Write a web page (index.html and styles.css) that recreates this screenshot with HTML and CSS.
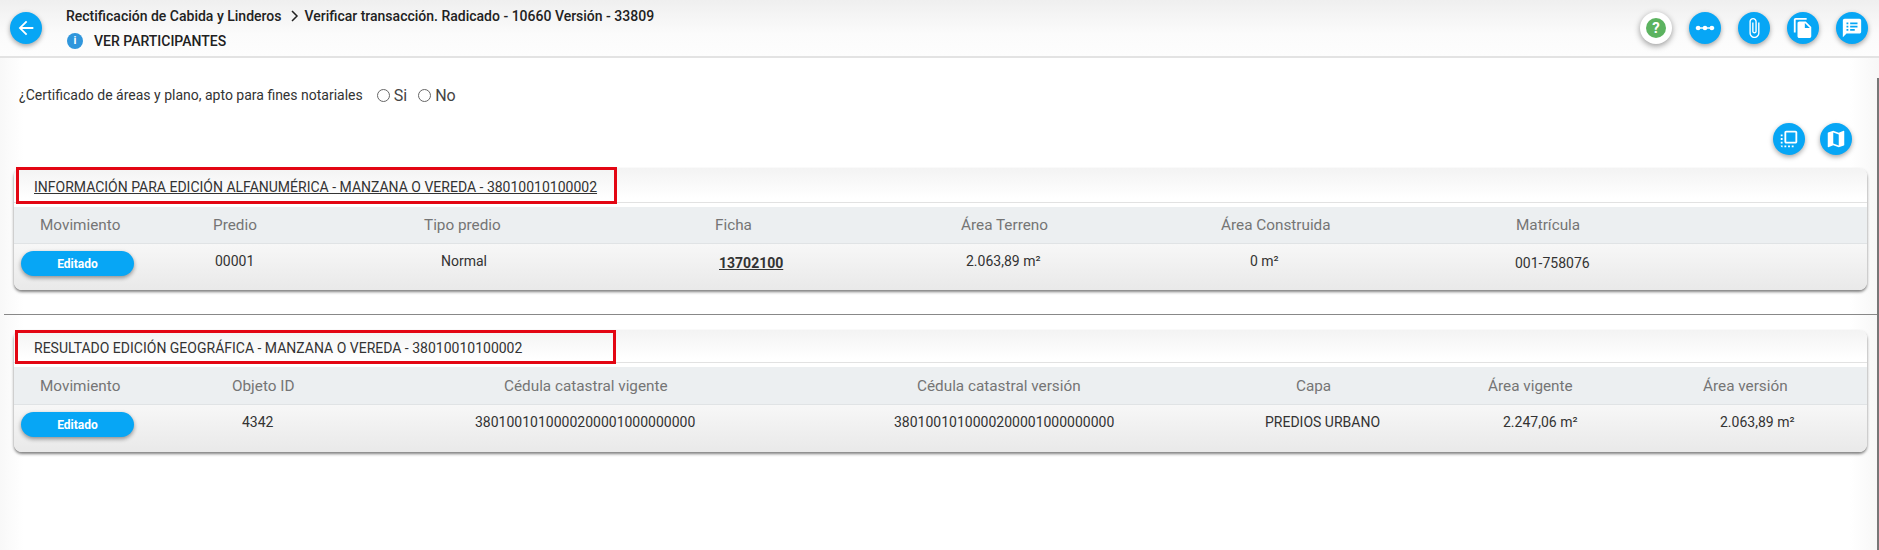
FILE: index.html
```html
<!DOCTYPE html>
<html lang="es">
<head>
<meta charset="utf-8">
<title>Verificar transacción</title>
<link rel="stylesheet" href="styles.css">
</head>
<body>
<header class="topbar">
  <button class="fab back"><svg viewBox="0 0 24 24"><path d="M20 11H7.83l5.59-5.59L12 4l-8 8 8 8 1.41-1.41L7.83 13H20v-2z"/></svg></button>
  <div class="heading">
    <div class="crumbs">Rectificación de Cabida y Linderos<svg class="chev" viewBox="0 0 10 12"><path d="M2 1l5 5-5 5" fill="none" stroke="#222" stroke-width="1.5"/></svg>Verificar transacción. Radicado - 10660 Versión - 33809</div>
    <div class="participants"><span class="info">i</span>VER PARTICIPANTES</div>
  </div>
  <div class="actions">
    <button class="fab help"><span class="help-dot">?</span></button>
    <button class="fab"><svg viewBox="0 0 24 24"><path d="M2 12h20" stroke="#fff" stroke-width="1.6"/><circle cx="4.500" cy="12" r="2.500"/><circle cx="12" cy="12" r="2.500"/><circle cx="19.500" cy="12" r="2.500"/></svg></button>
    <button class="fab"><svg viewBox="0 0 24 24"><path d="M16.5 6v11.500c0 2.210-1.790 4-4 4s-4-1.790-4-4V5c0-1.380 1.120-2.500 2.500-2.500s2.500 1.120 2.500 2.500v10.500c0 .55-.45 1-1 1s-1-.45-1-1V6H10v9.500c0 1.380 1.120 2.500 2.500 2.500s2.500-1.120 2.500-2.500V5c0-2.210-1.790-4-4-4S7 2.790 7 5v12.500c0 3.040 2.460 5.500 5.500 5.500s5.500-2.460 5.500-5.500V6h-1.500z"/></svg></button>
    <button class="fab"><svg viewBox="0 0 24 24"><path d="M16 1H4c-1.100 0-2 .9-2 2v14h2V3h12V1zm-1 4l6 6v10c0 1.100-.9 2-2 2H7.990C6.890 23 6 22.100 6 21l.01-14c0-1.100.89-2 1.990-2h7zm-1 7h5.500L14 6.500V12z"/></svg></button>
    <button class="fab"><svg viewBox="0 0 24 24"><path fill-rule="evenodd" d="M20 2H4c-1.100 0-2 .9-2 2v18l4-4h14c1.100 0 2-.9 2-2V4c0-1.100-.9-2-2-2zM6 6h2v2H6V6zm4 0h8v2h-8V6zm-4 3.500h2v2H6v-2zm4 0h8v2h-8v-2zM6 13h2v2H6v-2zm4 0h5v2h-5v-2z"/></svg></button>
  </div>
</header>

<main class="content">
  <span class="edge"></span>
  <form class="question">
    <span class="q-label">¿Certificado de áreas y plano, apto para fines notariales</span>
    <label class="opt"><span class="radio"></span>Si</label>
    <label class="opt"><span class="radio"></span>No</label>
  </form>

  <div class="tools">
    <button class="fab"><svg viewBox="0 0 24 24"><path d="M3 13h2v-2H3v2zm0 4h2v-2H3v2zm2 4v-2H3c0 1.100.89 2 2 2zM3 9h2V7H3v2zm12 12h2v-2h-2v2zm4-18H9c-1.110 0-2 .9-2 2v10c0 1.100.89 2 2 2h10c1.100 0 2-.9 2-2V5c0-1.100-.9-2-2-2zm0 12H9V5h10v10zm-8 6h2v-2h-2v2zm-4 0h2v-2H7v2z"/></svg></button>
    <button class="fab"><svg viewBox="0 0 24 24"><path d="M20.500 3l-.16.03L15 5.100 9 3 3.360 4.900c-.21.07-.36.25-.36.48V20.500c0 .28.22.5.5.5l.16-.03L9 18.900l6 2.100 5.640-1.900c.21-.07.36-.25.36-.48V3.500c0-.28-.22-.5-.5-.5zM15 19l-6-2.110V5l6 2.110V19z"/></svg></button>
  </div>

  <section class="card first">
    <span class="mark"></span>
    <h2 class="card-title linked">INFORMACIÓN PARA EDICIÓN ALFANUMÉRICA - MANZANA O VEREDA - 38010010100002</h2>
    <div class="thead cols-a-h">
      <span>Movimiento</span><span>Predio</span><span>Tipo predio</span><span>Ficha</span><span>Área Terreno</span><span>Área Construida</span><span>Matrícula</span>
    </div>
    <div class="tbody cols-a-b">
      <button class="pill">Editado</button><span>00001</span><span>Normal</span><a class="ficha low">13702100</a><span>2.063,89 m²</span><span>0 m²</span><span class="low">001-758076</span>
    </div>
  </section>

  <hr class="rule">

  <section class="card second">
    <span class="mark"></span>
    <h2 class="card-title">RESULTADO EDICIÓN GEOGRÁFICA - MANZANA O VEREDA - 38010010100002</h2>
    <div class="thead cols-b-h">
      <span>Movimiento</span><span>Objeto ID</span><span>Cédula catastral vigente</span><span>Cédula catastral versión</span><span>Capa</span><span>Área vigente</span><span>Área versión</span>
    </div>
    <div class="tbody cols-b-b">
      <button class="pill">Editado</button><span>4342</span><span>3801001010000200001000000000</span><span>3801001010000200001000000000</span><span>PREDIOS URBANO</span><span>2.247,06 m²</span><span>2.063,89 m²</span>
    </div>
  </section>
</main>
</body>
</html>
```
FILE: styles.css
```css
* { box-sizing: border-box; }
html, body { margin: 0; height: 100%; }
body {
  font-family: Roboto, "Liberation Sans", sans-serif;
  font-size: 14px;
  color: #212121;
  background: linear-gradient(90deg, #f8f8f8 0, #fff 24px, #fff 1850px, #f7f7f7 100%);
  overflow: hidden;
}
button { font-family: inherit; border: 0; padding: 0; cursor: pointer; }

.topbar {
  height: 58px;
  display: flex;
  align-items: center;
  padding: 0 11px 1px 10px;
  border-bottom: 2px solid #e3e3e3;
  background: linear-gradient(180deg, #efefef 0, #fbfbfb 60%, #fdfdfd 100%);
}
.fab {
  width: 32px;
  height: 32px;
  border-radius: 50%;
  background: #07a6f5;
  display: flex;
  align-items: center;
  justify-content: center;
  box-shadow: 0 2px 5px rgba(0, 0, 0, .35);
  flex: none;
}
.fab svg { width: 22px; height: 22px; fill: #fff; }
.heading { margin-left: 24px; flex: 1; margin-top: 2px; }
.crumbs {
  font-weight: 500;
  font-size: 14px;
  line-height: 18px;
  color: #222;
  white-space: nowrap;
  display: flex;
  align-items: center;
}
.chev { width: 10px; height: 12px; margin: 0 4px 0 9px; }
.participants {
  display: flex;
  align-items: center;
  margin-top: 7px;
  margin-left: 1px;
  font-weight: 500;
  font-size: 14px;
  line-height: 18px;
}
.info {
  width: 16px;
  height: 16px;
  border-radius: 50%;
  background: #2f96dc;
  color: #fff;
  font-size: 11px;
  font-weight: 700;
  line-height: 16px;
  text-align: center;
  margin-right: 11px;
}
.actions { display: flex; gap: 17px; }
.help { background: #fff; box-shadow: 0 2px 6px rgba(0, 0, 0, .4); }
.help-dot {
  width: 20px;
  height: 20px;
  border-radius: 50%;
  background: #5cb360;
  color: #fff;
  font-size: 15px;
  font-weight: 700;
  line-height: 20px;
  text-align: center;
}

.content { position: relative; padding: 0 12px 0 14px; height: 492px; }
.edge {
  position: absolute;
  right: 0;
  top: 20px;
  bottom: 0;
  width: 2px;
  background: #777;
}
.question {
  height: 76px;
  padding: 20px 0 0 5px;
  display: flex;
  align-items: flex-start;
  font-size: 14px;
  line-height: 35px;
}
.q-label { color: #333; margin-right: 14px; }
.opt { display: flex; align-items: center; margin-right: 11px; font-size: 16px; color: #444; }
.radio {
  width: 13px;
  height: 13px;
  border: 1px solid #666;
  border-radius: 50%;
  margin-right: 4px;
  background: #fff;
}
.tools { display: flex; justify-content: flex-end; gap: 15px; padding-right: 15px; height: 34px; margin-top: -11px; }

.card {
  position: relative;
  border-radius: 8px;
  box-shadow: 0 2px 3px rgba(0, 0, 0, .5);
  background: #fff;
  margin-top: 11px;
  width: 1853px;
}
.mark {
  position: absolute;
  border: 3px solid #e30613;
  pointer-events: none;
}
.first .mark { left: 2px; top: -1px; width: 601px; height: 37px; }
.second .mark { left: 1px; top: 0; width: 601px; height: 34px; }
.card-title {
  margin: 0;
  height: 35px;
  padding-left: 20px;
  font-weight: 400;
  font-size: 14px;
  line-height: 38px;
  color: #333;
  white-space: nowrap;
  border-radius: 8px 8px 0 0;
  background: linear-gradient(180deg, #f3f3f3 0, #fff 90%);
  border-bottom: 1px solid #e2e2e2;
}
.second .card-title { height: 33px; line-height: 36px; }
.linked { text-decoration: underline; }
.thead {
  display: grid;
  height: 37px;
  margin-top: 4px;
  align-items: center;
  background: #eceff1;
  border-bottom: 1px solid #e0e3e5;
  color: #757575;
  font-size: 15.300px;
  white-space: nowrap;
}
.second .thead { height: 38px; }
.tbody {
  display: grid;
  height: 46px;
  padding-top: 7px;
  align-items: start;
  border-radius: 0 0 8px 8px;
  background: linear-gradient(180deg, #f7f7f7 0, #e9e9e9 100%);
  font-size: 14px;
  line-height: 20px;
  white-space: nowrap;
  color: #333;
}
.second .tbody { height: 47px; }
.cols-a-h { grid-template-columns: 173px 211px 291px 246px 260px 295px 1fr; padding-left: 26px; }
.cols-a-b { grid-template-columns: 194px 226px 278px 247px 284px 265px 1fr; padding-left: 7px; }
.cols-b-h { grid-template-columns: 192px 272px 413px 379px 192px 215px 1fr; padding-left: 26px; }
.cols-b-b { grid-template-columns: 221px 233px 419px 371px 238px 217px 1fr; padding-left: 7px; }
.pill {
  width: 113px;
  height: 25px;
  border-radius: 13px;
  background: #07a6f5;
  color: #fff;
  font-size: 12px;
  font-weight: 700;
  box-shadow: 0 2px 4px rgba(0, 0, 0, .4);
}
.low { margin-top: 2px; }
.ficha { font-weight: 700; text-decoration: underline; }
.rule { margin: 24px -12px 15px -10px; border: 0; border-top: 1px solid #888; height: 0; }
.second { margin-top: 0; }
```
